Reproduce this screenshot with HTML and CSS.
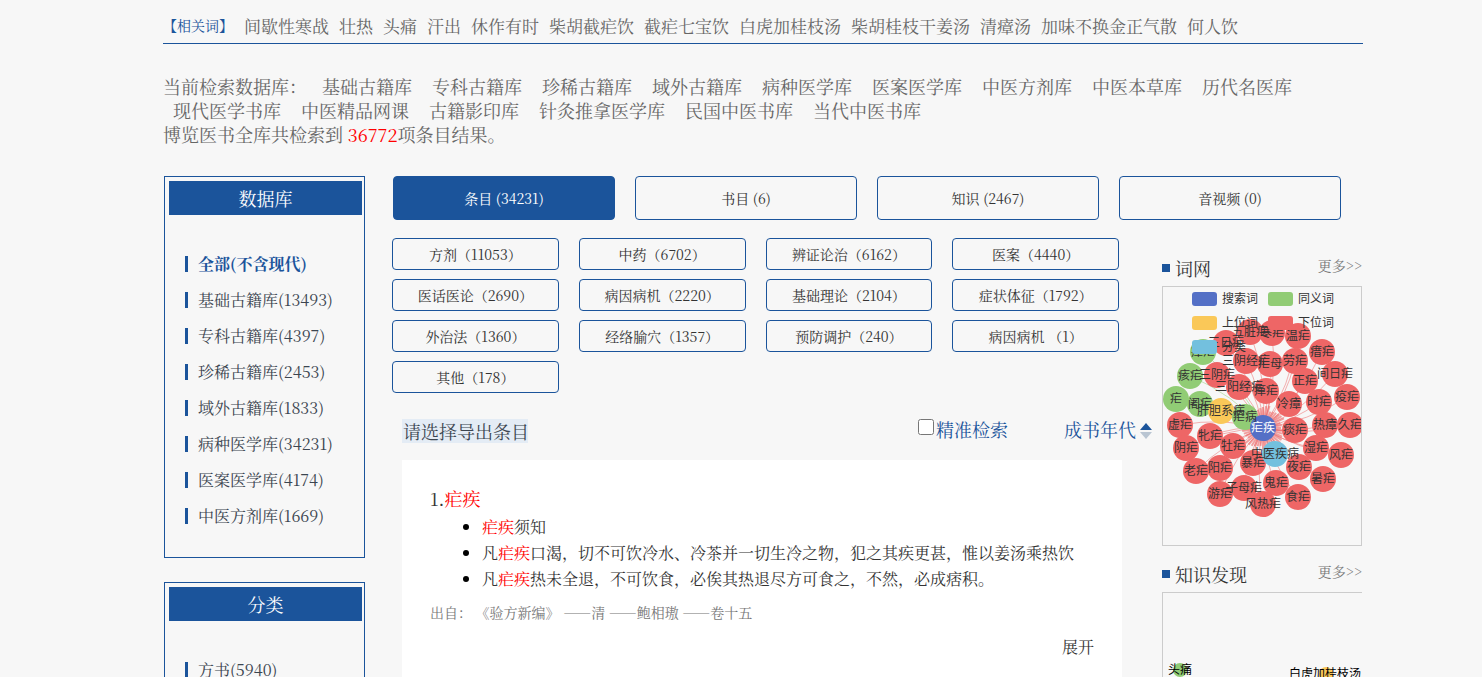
FILE: index.html
```html
<!DOCTYPE html>
<html lang="zh-CN"><head><meta charset="utf-8"><title>检索结果</title><link rel="stylesheet" href="styles.css"></head>
<body>
<div class="page">
<nav class="related"><span class="related-label">【相关词】</span>
<a href="#">间歇性寒战</a><a href="#">壮热</a><a href="#">头痛</a><a href="#">汗出</a><a href="#">休作有时</a><a href="#">柴胡截疟饮</a><a href="#">截疟七宝饮</a><a href="#">白虎加桂枝汤</a><a href="#">柴胡桂枝干姜汤</a><a href="#">清瘴汤</a><a href="#">加味不换金正气散</a><a href="#">何人饮</a></nav>
<section class="scope">
<div class="scope-list"><span class="scope-label">当前检索数据库：</span><span>基础古籍库</span><span>专科古籍库</span><span>珍稀古籍库</span><span>域外古籍库</span><span>病种医学库</span><span>医案医学库</span><span>中医方剂库</span><span>中医本草库</span><span>历代名医库</span><span>现代医学书库</span><span>中医精品网课</span><span>古籍影印库</span><span>针灸推拿医学库</span><span>民国中医书库</span><span>当代中医书库</span></div>
<p class="total">博览医书全库共检索到 <em>36772</em>项条目结果。</p>
</section>
<div class="columns">
<aside class="side">
<section class="panel"><h2>数据库</h2><ul>
<li class="current"><a href="#">全部(不含现代)</a></li><li><a href="#">基础古籍库(13493)</a></li><li><a href="#">专科古籍库(4397)</a></li><li><a href="#">珍稀古籍库(2453)</a></li><li><a href="#">域外古籍库(1833)</a></li><li><a href="#">病种医学库(34231)</a></li><li><a href="#">医案医学库(4174)</a></li><li><a href="#">中医方剂库(1669)</a></li></ul></section>
<section class="panel"><h2>分类</h2><ul><li><a href="#">方书(5940)</a></li></ul></section>
</aside>
<div class="center">
<div class="tabs"><button class="active">条目 (34231)</button><button>书目 (6)</button><button>知识 (2467)</button><button>音视频 (0)</button></div>
<main class="main">
<div class="filters"><button>方剂（11053）</button><button>中药（6702）</button><button>辨证论治（6162）</button><button>医案（4440）</button><button>医话医论（2690）</button><button>病因病机（2220）</button><button>基础理论（2104）</button><button>症状体征（1792）</button><button>外治法（1360）</button><button>经络腧穴（1357）</button><button>预防调护（240）</button><button>病因病机 （1）</button><button>其他（178）</button></div>
<div class="toolbar"><a class="export" href="#">请选择导出条目</a><label class="exact"><input type="checkbox">精准检索</label><a class="sort" href="#">成书年代<svg width="12" height="16" viewBox="0 0 12 16" aria-hidden="true"><path d="M6 0 12 7H0Z" fill="#1b549b"/><path d="M0 9H12L6 16Z" fill="#b9c5d2"/></svg></a></div>
<article class="result"><h3>1.<em>疟疾</em></h3>
<ul><li><em>疟疾</em>须知</li><li>凡<em>疟疾</em>口渴，切不可饮冷水、冷茶并一切生冷之物，犯之其疾更甚，惟以姜汤乘热饮</li><li>凡<em>疟疾</em>热未全退，不可饮食，必俟其热退尽方可食之，不然，必成痞积。</li></ul>
<p class="source">出自： 《验方新编》 ——清 ——鲍相璈 ——卷十五</p><a class="expand" href="#">展开</a></article>
</main>
</div>
<aside class="graphs">
<header><h2>词网</h2><a href="#">更多&gt;&gt;</a></header>
<div class="graph" id="net"></div>
<header><h2>知识发现</h2><a href="#">更多&gt;&gt;</a></header>
<div class="graph second"><svg width="200" height="258"><circle cx="17" cy="77" r="7" fill="#91cc75"/><circle cx="163" cy="81" r="7" fill="#fac858"/><g class="dark"><text x="17" y="81">头痛</text><text x="162" y="85">白虎加桂枝汤</text></g></svg></div>
</aside>
</div>
</div>
<script src="graph.js"></script>
</body></html>
```
FILE: styles.css
```css
* { box-sizing: border-box; }
body { margin: 0; background: #f7f7f7; color: #333; font: 16px/24px "Noto Serif CJK SC", "Source Han Serif SC", "Noto Serif SC", "Noto Sans CJK SC", serif; overflow: hidden; height: 100vh; }
a { color: inherit; text-decoration: none; }
em { color: #f00; font-style: normal; }
h2, h3, p, ul { margin: 0; padding: 0; font-weight: normal; }
button { font: inherit; font-size: 14px; line-height: 20px; color: #333; background: transparent; border: 1px solid #1b549b; border-radius: 4px; padding: 0; }
.page { margin: 0 8% 0 11%; min-width: 1200px; }
.related { display: flex; gap: 10px; align-items: center; height: 44px; padding-top: 9px; border-bottom: 1px solid #1b549b; color: #666; font-size: 17px; }
.related-label { color: #1b549b; font-size: 14px; line-height: 20px; margin-right: 1px; padding-bottom: 2px; }
.scope { padding-top: 30px; color: #666; font-size: 18px; line-height: 24px; }
.scope-list { display: flex; flex-wrap: wrap; }
.scope-list span { padding: 0 10px; }
.scope-list .scope-label { padding: 0 5px 0 0; }
.columns { display: flex; margin-top: 30px; }
.side { width: 201px; margin-left: 1px; }
.panel { border: 1px solid #1b549b; padding: 4px 2px 23px 4px; margin-bottom: 24px; }
.panel h2 { background: #1b549b; color: #fff; font-size: 18px; line-height: 34px; text-align: center; }
.panel ul { padding: 31px 0 0 16px; list-style: none; }
.panel li { display: flex; align-items: center; height: 36px; color: #3b4550; }
.panel li::before { content: ""; width: 3px; height: 16px; background: #1b549b; margin-right: 10px; }
.panel .current { color: #1b549b; font-weight: bold; }
.center { width: 760px; margin-left: 27px; }
.tabs { display: grid; grid-template-columns: repeat(4, 222px); gap: 20px; padding-left: 1px; }
.tabs button { height: 44px; }
.tabs .active { background: #1b549b; color: #fff; }
.filters { display: grid; grid-template-columns: repeat(4, 1fr); gap: 9px 20px; width: 727px; margin-top: 18px; }
.filters button { height: 32px; }
.toolbar { display: flex; align-items: center; font-size: 18px; color: #1b549b; margin: 22px 0 17px 10px; height: 28px; }
.export { background: #e4ecf5; color: #3b4550; line-height: 24px; padding-left: 1px; width: 126px; white-space: nowrap; align-self: flex-end; }
.exact { display: flex; align-items: center; margin-left: auto; }
.exact input { width: 16px; height: 16px; margin: 0 2px 4px 0; }
.sort { display: flex; align-items: center; gap: 4px; margin-left: 56px; }
.sort svg { margin-top: 4px; }
.result { width: 720px; min-height: 260px; background: #fff; margin-left: 10px; padding: 25px 28px; display: flow-root; }
.result h3 { font-size: 18px; line-height: 26px; }
.result ul { padding: 3px 0 0 52px; line-height: 26px; }
.result li::marker { color: #000; }
.source { font-size: 14px; color: #777; margin-top: 8px; }
.expand { display: block; text-align: right; margin-top: 11px; }
.graphs { width: 200px; margin: 80px 0 0 10px; }
.graphs header { display: flex; align-items: center; height: 24px; margin-bottom: 6px; }
.graphs h2 { display: flex; align-items: center; font-size: 18px; margin-right: auto; }
.graphs h2::before { content: ""; width: 8px; height: 8px; background: #1b549b; margin-right: 5px; }
.graphs header a { font-size: 14px; color: #777; padding-bottom: 6px; }
.graph { border: 1px solid #ccc; height: 260px; margin-bottom: 16px; overflow: hidden; }
.second { border-right: 0; }
.graph svg { display: block; font: 12px "Noto Sans CJK SC", sans-serif; fill: #333; }
.graph text { text-anchor: middle; }
.graph .legend-text text { text-anchor: start; }
.graph .dark { fill: #000; }
```
FILE: graph.js
```javascript
const R = "#ee6666", G = "#91cc75", Y = "#fac858", C = "#73c0de", B = "#5470c6";
const nodes = [
  [87,45,"五脏疟",R],[63,56,"三日疟",R],[109,46,"寒疟",R],[135,49,"温疟",R],[40,65,"瘴疟",G],
  [83,74,"三阴经疟",R],[107,77,"疟母",R],[132,74,"劳疟",R],[159,65,"瘄疟",R],[27,89,"痎疟",G],
  [54,88,"三阴疟",R],[142,94,"正疟",R],[172,87,"间日疟",R],[76,100,"三阳经疟",R],[103,104,"瘅疟",R],
  [13,112,"疟",G],[37,117,"阇疟",G],[126,117,"冷瘴",R],[156,115,"时疟",R],[184,110,"疫疟",R],
  [58,124,"肝胆系病",Y],[82,130,"疟病",G],[17,138,"虚疟",R],[47,149,"牝疟",R],[132,143,"痰疟",R],
  [162,138,"热瘴",R],[187,138,"久疟",R],[23,161,"阴疟",R],[70,159,"牡疟",R],[153,161,"湿疟",R],
  [178,168,"风疟",R],[90,176,"暴疟",R],[33,184,"老疟",R],[57,181,"阳疟",R],[136,180,"夜疟",R],
  [160,192,"暑疟",R],[81,201,"子母疟",R],[113,196,"鬼疟",R],[57,207,"游疟",R],[135,210,"食疟",R],
  [100,217,"风热疟",R],[112,167,"中医疾病",C],[100,141,"疟疾",B]
];
let out = "";
for (const [x, y, , c] of nodes) out += `<path d="M100 141Q${(100 + x) / 2 + (141 - y) / 9} ${(141 + y) / 2 + (x - 100) / 9} ${x} ${y}" fill="none" stroke="${c}" opacity=".5"/>`;
for (let i = 0; i < 44; i++) {
  const a = i * Math.PI / 22, r = 18 + (i * 7) % 6;
  out += `<path d="M100 141L${100 + r * Math.cos(a)} ${141 + r * Math.sin(a)}" stroke="${R}" stroke-width="2" opacity=".6"/>`;
}
for (const [x, y, , c] of nodes) out += `<circle cx="${x}" cy="${y}" r="13" fill="${c}"/>`;
for (const [x, y, t, c] of nodes) out += `<text x="${x}" y="${y + 4}"${c === B ? ' fill="#fff"' : ""}>${t}</text>`;
let legend = "";
for (const [x, y, t, c] of [[29,5,"搜索词",B],[105,5,"同义词",G],[29,29,"上位词",Y],[105,29,"下位词",R],[29,53,"分类",C]])
  legend += `<rect x="${x}" y="${y}" width="25" height="14" rx="3" fill="${c}"/><text x="${x + 30}" y="${y + 11}">${t}</text>`;
document.getElementById("net").innerHTML = `<svg width="198" height="258">${out}<g class="legend-text">${legend}</g></svg>`;
```
